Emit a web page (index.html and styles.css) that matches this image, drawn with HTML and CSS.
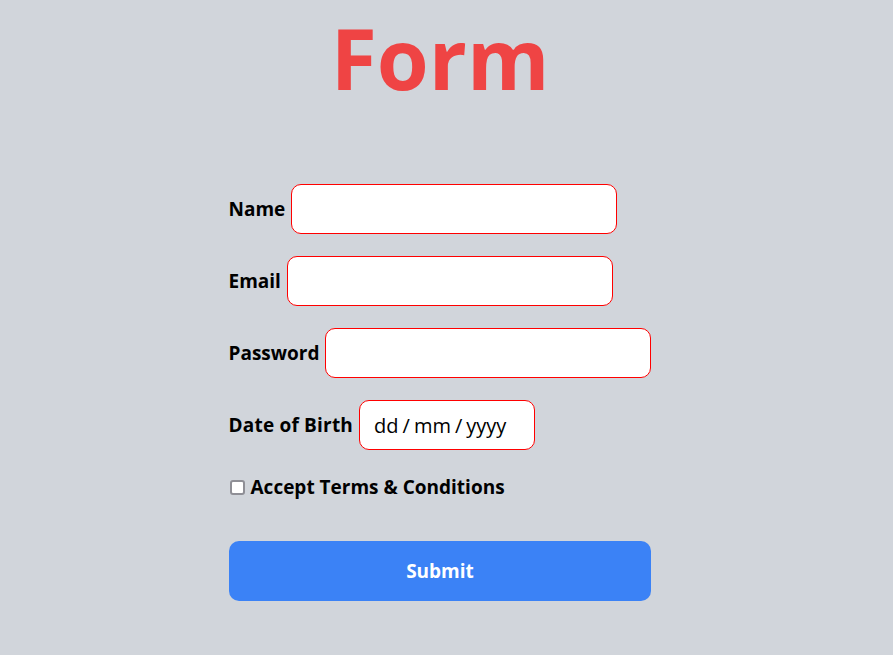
FILE: index.html
```html
<!DOCTYPE html>
<html lang="en">
<head>
<meta charset="utf-8">
<title>Form</title>
<link rel="stylesheet" href="styles.css">
</head>
<body>
<div class="page">
  <h1 class="title">Form</h1>
  <form class="form">
    <div class="row">
      <label class="label" for="name">Name</label>
      <input class="field" id="name" type="text">
    </div>
    <div class="row">
      <label class="label" for="email">Email</label>
      <input class="field" id="email" type="email">
    </div>
    <div class="row">
      <label class="label" for="password">Password</label>
      <input class="field" id="password" type="password">
    </div>
    <div class="row">
      <label class="label wide" for="dob">Date of Birth</label>
      <div class="field date"><span>dd</span><span class="sep">/</span><span>mm</span><span class="sep">/</span><span>yyyy</span></div>
    </div>
    <div class="check-row">
      <input class="check" id="terms" type="checkbox">
      <label class="label" for="terms">Accept Terms &amp; Conditions</label>
    </div>
    <button class="submit" type="button">Submit</button>
  </form>
</div>
</body>
</html>
```
FILE: styles.css
```css
html, body {
  margin: 0;
  padding: 0;
  background: #d1d5db;
}
body {
  font-family: "Open Sans", "Noto Sans", sans-serif;
  color: #000;
}
.page {
  width: 880px;
  display: flex;
  flex-direction: column;
  align-items: center;
}
.title {
  margin: 0;
  font-size: 84px;
  line-height: 115px;
  font-weight: 700;
  color: #ef4444;
}
.form {
  margin-top: 69px;
  display: flex;
  flex-direction: column;
  align-items: flex-start;
}
.row {
  display: flex;
  align-items: center;
  gap: 6px;
  margin-bottom: 22px;
}
.label {
  font-size: 19px;
  font-weight: 700;
}
.wide {
  letter-spacing: 0.2px;
}
.field {
  box-sizing: border-box;
  width: 326px;
  height: 50px;
  border: 1px solid #ff0000;
  border-radius: 10px;
  background: #fff;
  font: inherit;
  font-size: 18px;
  padding: 0 14px;
  outline: none;
}
.date {
  width: 176px;
  display: flex;
  align-items: center;
  gap: 3px;
  font-size: 20px;
}
.sep { padding: 0 1px; }
.check-row {
  display: flex;
  align-items: center;
  gap: 6px;
  height: 30px;
}
.check {
  appearance: none;
  -webkit-appearance: none;
  box-sizing: border-box;
  margin: 0 0 0 1px;
  width: 15px;
  height: 15px;
  border: 2px solid #8f8f96;
  border-radius: 3px;
  background: #fff;
}
.submit {
  margin-top: 39px;
  width: 100%;
  height: 60px;
  border: none;
  border-radius: 10px;
  background: #3b82f6;
  color: #fff;
  font: inherit;
  font-size: 19px;
  font-weight: 700;
}
```
